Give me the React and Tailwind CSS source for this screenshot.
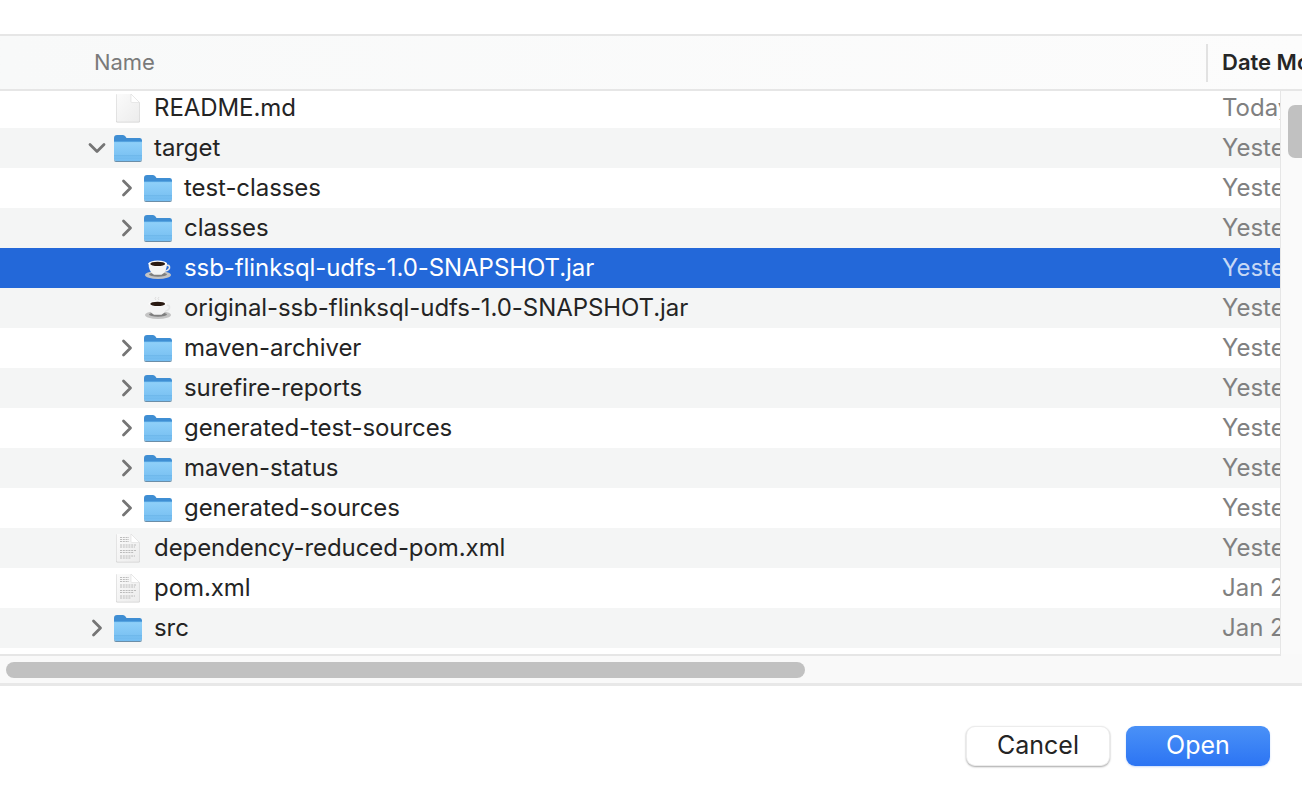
const rows = [
  { name: "README.md", date: "Today", icon: "file", depth: 0, first: true },
  { name: "target", date: "Yesterday", icon: "folder", depth: 0, open: true },
  { name: "test-classes", date: "Yesterday", icon: "folder", depth: 1, closed: true },
  { name: "classes", date: "Yesterday", icon: "folder", depth: 1, closed: true },
  { name: "ssb-flinksql-udfs-1.0-SNAPSHOT.jar", date: "Yesterday", icon: "jar", depth: 1, selected: true },
  { name: "original-ssb-flinksql-udfs-1.0-SNAPSHOT.jar", date: "Yesterday", icon: "jar", depth: 1, steam: true },
  { name: "maven-archiver", date: "Yesterday", icon: "folder", depth: 1, closed: true },
  { name: "surefire-reports", date: "Yesterday", icon: "folder", depth: 1, closed: true },
  { name: "generated-test-sources", date: "Yesterday", icon: "folder", depth: 1, closed: true },
  { name: "maven-status", date: "Yesterday", icon: "folder", depth: 1, closed: true },
  { name: "generated-sources", date: "Yesterday", icon: "folder", depth: 1, closed: true },
  { name: "dependency-reduced-pom.xml", date: "Yesterday", icon: "doc", depth: 0 },
  { name: "pom.xml", date: "Jan 20", icon: "doc", depth: 0 },
  { name: "src", date: "Jan 20", icon: "folder", depth: 0, closed: true },
];

function FolderIcon() {
  return (
    <svg width="30" height="28" viewBox="0 0 30 28">
      <defs>
        <linearGradient id="folderBody" x1="0" y1="0" x2="0" y2="1">
          <stop offset="0" stopColor="#8fd0f9" />
          <stop offset="1" stopColor="#74bdf1" />
        </linearGradient>
      </defs>
      <path d="M1 4 Q1 1 4 1 H10 Q11.500 1 12.500 2.500 L13.500 4 H27 Q29 4 29 6.500 V12 H1 Z" fill="#3f8ed3" />
      <path d="M1 8 H29 V25 Q29 27 27 27 H3 Q1 27 1 25 Z" fill="url(#folderBody)" />
      <rect x="1" y="7.300" width="28" height="0.800" fill="#5fade6" />
      <rect x="1" y="21.500" width="28" height="0.700" fill="#62aee4" />
      <rect x="1" y="23.800" width="28" height="0.500" fill="#68b3e8" />
      <path d="M1 25 Q1 27 3 27 H27 Q29 27 29 25 V26 Q29 28 27 28 H3 Q1 28 1 26 Z" fill="#6b8ea8" />
    </svg>
  );
}

function FileIcon({ lines, id }) {
  return (
    <svg width="26" height="30" viewBox="0 0 26 30">
      <defs>
        <linearGradient id={id} x1="0" y1="0" x2="1" y2="1">
          <stop offset="0" stopColor="#fbfbfb" />
          <stop offset="1" stopColor="#ececec" />
        </linearGradient>
      </defs>
      <path d="M1.500 1 H16 L25 10 V28 Q25 29.500 23.500 29.500 H2.500 Q1 29.500 1 28 V1.500 Z" fill="#cfcfcf" />
      <path d="M2 1 H16 L24.500 9.500 V27.500 Q24.500 28.700 23.300 28.700 H2.700 Q1.500 28.700 1.500 27.500 V1.500 Z" fill={`url(#${id})`} />
      <path d="M16 1 L24.500 9.500 H17 Q16 9.500 16 8.500 Z" fill="#ffffff" stroke="#dcdcdc" strokeWidth="0.600" />
      {lines && (
        <g stroke="#b4b4b4" strokeWidth="0.900" strokeDasharray="2 0.800">
          <path d="M5 4.500 H14" />
          <path d="M5 6.500 H14" />
          <path d="M5 8.500 H14" />
          <path d="M5 12 H21" />
          <path d="M5 14 H20" />
          <path d="M5 17.500 H21" />
          <path d="M5 19.500 H19" />
          <path d="M5 23 H20" />
          <path d="M5 25 H16" />
        </g>
      )}
    </svg>
  );
}

function JarIcon({ steam }) {
  return (
    <svg width="28" height="24" viewBox="0 0 28 24">
      {steam && <path d="M12 4 Q10 2.500 12 1 M15 4 Q13 2.500 15 1" fill="none" stroke="#dedede" strokeWidth="1" />}
      <ellipse cx="14" cy="19" rx="13" ry="4" fill="#c4c4c4" />
      <ellipse cx="14" cy="18.500" rx="9" ry="2.200" fill="#7f7f7f" />
      <path d="M21 9 Q26 8.500 25.500 12 Q24.500 15 19 15.500" fill="none" stroke="#e6e6e6" strokeWidth="1.600" />
      <path d="M4.500 7 H23 Q23 16 17.500 18.800 H10 Q4.500 16 4.500 7 Z" fill="#f4f4f4" />
      <ellipse cx="13.700" cy="7.500" rx="9.300" ry="3" fill="#fcfcfc" />
      <ellipse cx="13.700" cy="7.900" rx="7.400" ry="2.200" fill="#2a1a12" />
    </svg>
  );
}

function Chevron({ open }) {
  return (
    <svg width="18" height="18" viewBox="0 0 18 18" fill="none" stroke="#757575" strokeWidth="2.800" strokeLinecap="round" strokeLinejoin="round">
      {open ? <path d="M2 5.500 L9 12.500 L16 5.500" /> : <path d="M5.500 2 L12.500 9 L5.500 16" />}
    </svg>
  );
}

function Row({ row, index }) {
  const bg = row.selected ? "bg-[#2368d9]" : index % 2 === 1 ? "bg-[#f4f5f5]" : "bg-white";
  const text = row.selected ? "text-white" : "text-[#242424]";
  const date = row.selected ? "text-[#c6d8f5]" : "text-[#808080]";
  return (
    <div className={`flex items-end overflow-hidden ${row.first ? "h-[37px]" : "h-10"} ${bg}`}>
      <div className="flex items-center w-full h-10 shrink-0">
        <div className={`flex items-center shrink-0 ${row.depth === 1 ? "w-[184px]" : "w-[154px]"}`}>
          <div className={`flex justify-center shrink-0 w-[18px] ${row.depth === 1 ? "ml-[118px]" : "ml-[88px]"}`}>
            {(row.open || row.closed) && <Chevron open={row.open} />}
          </div>
          <div className="flex justify-center shrink-0 w-[30px] ml-[7px]">
            {row.icon === "folder" && <FolderIcon />}
            {row.icon === "file" && <FileIcon id="plainFile" />}
            {row.icon === "doc" && <FileIcon lines id={`docFile${index}`} />}
            {row.icon === "jar" && <JarIcon steam={row.steam} />}
          </div>
        </div>
        <div className={`flex-1 text-[24px] tracking-[-0.07px] leading-none whitespace-nowrap ${text}`}>{row.name}</div>
        <div className={`w-[58px] shrink-0 text-[24px] leading-none whitespace-nowrap overflow-hidden ${date}`}>{row.date}</div>
      </div>
    </div>
  );
}

export default function App() {
  return (
    <div className="w-[1302px] h-[800px] overflow-hidden bg-white flex flex-col font-['Inter','Liberation_Sans',sans-serif]">
      <div className="h-[34px] shrink-0" />
      <div className="h-[57px] shrink-0 flex items-center border-y-2 border-[#e6e6e6] bg-gradient-to-r from-[#f8f9f9] to-[#fcfcfc]">
        <div className="w-[94px] shrink-0" />
        <div className="text-[22px] tracking-[-0.1px] text-[#7a7a7a]">Name</div>
        <div className="ml-auto h-[38px] w-[2px] bg-[#e2e2e2]" />
        <div className="w-[94px] pl-[14px] text-[22px] font-semibold text-[#262626] whitespace-nowrap overflow-hidden">Date Modified</div>
      </div>
      <div className="flex h-[563px] shrink-0">
        <div className="w-[1280px] shrink-0 flex flex-col">
          {rows.map((row, i) => (
            <Row key={row.name} row={row} index={i} />
          ))}
        </div>
        <div className="flex-1 bg-[#fafafa] border-l border-[#e6e6e6] pl-[7px] pt-[14px]">
          <div className="w-[14px] h-[53px] rounded-l-[7px] bg-[#c1c1c1]" />
        </div>
      </div>
      <div className="h-[32px] shrink-0 bg-[#f9f9f9] border-b-[3px] border-[#e8e8e8] flex flex-col">
        <div className="h-[2px] w-[1281px] shrink-0 bg-[#e6e6e6]" />
        <div className="pl-[6px] pt-[6px]">
          <div className="w-[799px] h-[16px] rounded-full bg-[#c1c1c1]" />
        </div>
      </div>
      <div className="flex-1 flex justify-end items-start pt-[40px] pr-[32px] gap-4">
        <button className="w-[144px] h-[40px] rounded-[9px] bg-white text-[25px] text-[#242424] border border-[#ececec] shadow-[0_1px_2px_rgba(0,0,0,0.35)]">Cancel</button>
        <button className="w-[144px] h-[40px] rounded-[9px] bg-gradient-to-b from-[#4a91f7] to-[#2c74f3] text-[25px] text-white shadow-[0_1px_2px_rgba(40,110,240,0.25)]">Open</button>
      </div>
    </div>
  );
}
